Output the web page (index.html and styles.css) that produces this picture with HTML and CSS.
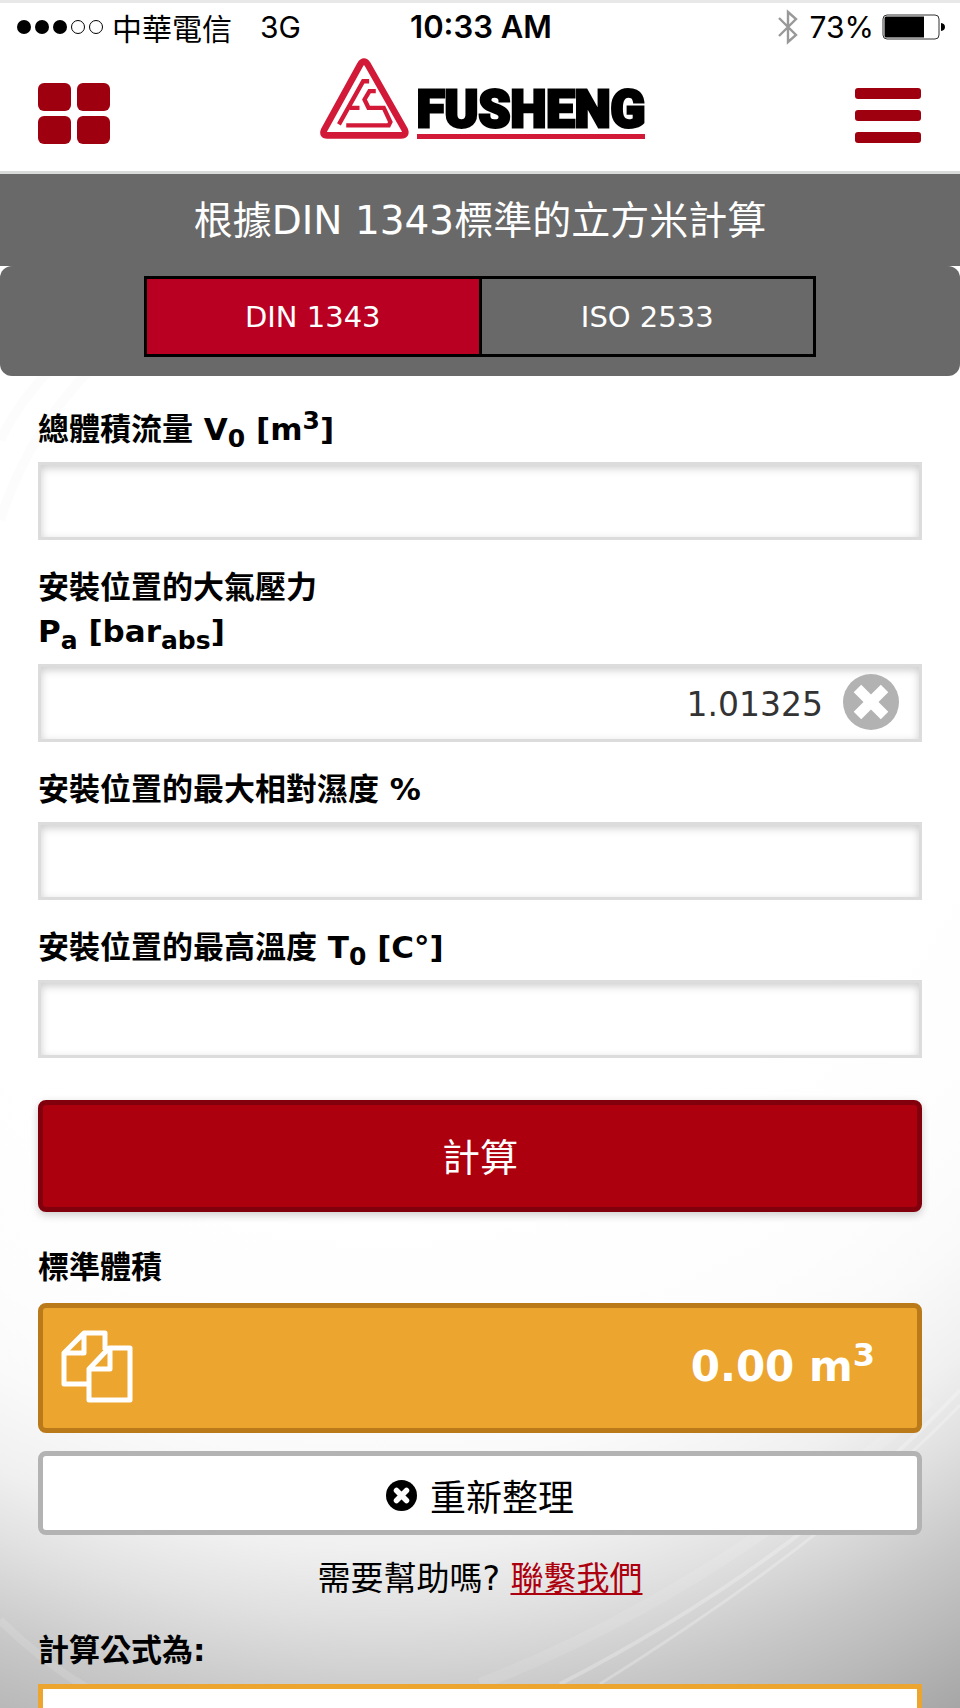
FILE: index.html
```
<!DOCTYPE html>
<html lang="zh-Hant">
<head>
<meta charset="utf-8">
<meta name="viewport" content="width=device-width, initial-scale=1">
<title>FUSHENG</title>
<link rel="stylesheet" href="styles.css">
</head>
<body class="page">
<svg class="rays" viewBox="0 0 960 1708" preserveAspectRatio="none" aria-hidden="true">
  <g fill="none" stroke="#fff">
    <path stroke-opacity=".25" stroke-width="4" d="M560 1684Q800 1560 960 1390"/>
    <path stroke-opacity=".25" stroke-width="3" d="M600 1684Q830 1540 960 1405"/>
    <path stroke-opacity=".1" stroke-width="12" d="M480 1684Q720 1590 930 1400"/>
    <path stroke-opacity=".12" stroke-width="8" d="M0 1620Q40 1660 90 1690"/>
  </g>
  <g fill="none" stroke="#000" stroke-opacity=".01" stroke-width="10">
    <path d="M0 440Q20 400 50 370"/>
    <path d="M0 520Q30 430 90 370"/>
  </g>
</svg>
<div class="status">
  <div class="status-left">
    <svg class="signal" width="88" height="16" viewBox="0 0 88 16" aria-hidden="true">
      <circle cx="8" cy="8" r="7"/><circle cx="26" cy="8" r="7"/><circle cx="44" cy="8" r="7"/>
      <g fill="#fff" stroke="#000"><circle cx="62" cy="8" r="6.5"/><circle cx="80" cy="8" r="6.5"/></g>
    </svg>
    <span class="carrier">中華電信</span>
    <span>3G</span>
  </div>
  <div class="clock">10:33 AM</div>
  <div class="status-right">
    <svg width="20" height="36" viewBox="0 0 20 36" fill="none" stroke="#999" stroke-width="2.4" aria-hidden="true">
      <path d="M1 9L18 26L10 33V3L18 10L1 27"/>
    </svg>
    <span>73%</span>
    <svg width="64" height="26" viewBox="0 0 64 26" aria-hidden="true">
      <rect x="1" y="1" width="56" height="24" rx="4" fill="#fff" stroke="#333"/>
      <path d="M4 2.500H42V23.500H4Q2.500 23.500 2.500 22V4Q2.500 2.500 4 2.500Z"/>
      <path d="M59 9Q63 9.500 63 13T59 17Z"/>
    </svg>
  </div>
</div>
<header class="header">
  <button class="icon-btn" type="button" aria-label="應用">
    <svg width="72" height="61" viewBox="0 0 72 61" fill="#9f000f">
      <rect width="33" height="28" rx="6"/><rect x="39" width="33" height="28" rx="6"/>
      <rect y="33" width="33" height="28" rx="6"/><rect x="39" y="33" width="33" height="28" rx="6"/>
    </svg>
  </button>
  <a class="logo" href="#">
    <svg width="89" height="81" viewBox="60 24 268 244" fill="none" stroke="#d21a38" aria-hidden="true">
      <path stroke-width="20" d="M181 44Q192 26 204 44L315 240Q322 257 304 257H82Q65 257 73 240Z"/>
      <g stroke-width="13">
        <path d="M208 94H190L117 224M150 174H179"/>
        <path d="M228 124H209L194 149L206 174H252L272 217L267 227H139"/>
      </g>
    </svg>
    <span class="wordmark">FUSHENG</span>
  </a>
  <button class="icon-btn" type="button" aria-label="選單">
    <svg width="66" height="60" viewBox="0 0 66 60" fill="#9f000f">
      <rect y="4" width="66" height="11" rx="3"/><rect y="26" width="66" height="11" rx="3"/><rect y="48" width="66" height="11" rx="3"/>
    </svg>
  </button>
</header>
<h1 class="title">根據DIN 1343標準的立方米計算</h1>
<nav class="switch">
  <button class="tab tab-on" type="button">DIN 1343</button>
  <button class="tab" type="button">ISO 2533</button>
</nav>
<main class="content">
  <form class="form">
    <label class="label" for="flow">總體積流量 V<sub>0</sub> [m<sup>3</sup>]</label>
    <input class="input" id="flow" type="text">
    <label class="label" for="pressure">安裝位置的大氣壓力<br>P<sub>a</sub> [bar<sub>abs</sub>]</label>
    <div class="clearable">
      <input class="input" id="pressure" type="text" value="1.01325">
      <button class="clear" type="button" aria-label="清除">
        <svg width="56" height="56" viewBox="0 0 58 58">
          <circle cx="29" cy="29" r="29" fill="#b2b2b2"/>
          <path d="M15 15L43 43M43 15L15 43" stroke="#fff" stroke-width="11"/>
        </svg>
      </button>
    </div>
    <label class="label" for="humidity">安裝位置的最大相對濕度 %</label>
    <input class="input" id="humidity" type="text">
    <label class="label" for="temp">安裝位置的最高溫度 T<sub>0</sub> [C°]</label>
    <input class="input" id="temp" type="text">
    <button class="submit" type="button">計算</button>
  </form>
  <h2 class="label result-label">標準體積</h2>
  <div class="result">
    <svg width="72" height="74" viewBox="0 0 72 74" fill="none" stroke="#fff" stroke-width="5" stroke-linejoin="round" aria-hidden="true">
      <path d="M27 55H3V24L23 4H44V21M23 4V24H3"/>
      <path d="M28 40L48 19H69V71H28ZM49 19V40H28"/>
    </svg>
    <output class="value">0.00 m<sup>3</sup></output>
  </div>
  <button class="reset" type="button">
    <svg width="31" height="31" viewBox="0 0 31 31" aria-hidden="true">
      <circle cx="15.500" cy="15.500" r="15.500"/>
      <path d="M10.500 10.500L20.500 20.500M20.500 10.500L10.500 20.500" stroke="#fff" stroke-width="5.500" stroke-linecap="round"/>
    </svg>
    <span>重新整理</span>
  </button>
  <p class="help">需要幫助嗎? <a class="link" href="#">聯繫我們</a></p>
  <h2 class="label formula-label">計算公式為:</h2>
  <div class="formula"></div>
</main>
</body>
</html>
```

FILE: styles.css
```
*, *::before, *::after { box-sizing: border-box; }

.page {
  position: relative;
  display: flex;
  flex-direction: column;
  min-height: 100vh;
  margin: 0;
  color: #000;
  font-family: "DejaVu Sans", "Noto Sans CJK TC", sans-serif;
  background: radial-gradient(circle 1300px at 40% 600px, #fff 45%, #fdfdfd 60%, #fafafa 66%, #f0f0f0 73%, #e1e1e1 78%, #c8c8c8 85%, #b9b9b9 90%, #a6a6a6 96%);
}

.rays {
  position: absolute;
  inset: 0;
  z-index: -1;
  width: 100%;
  height: 100%;
}

button, input { font-family: inherit; margin: 0; }
button { padding: 0; border: 0; background: none; cursor: pointer; }
svg { display: block; flex: none; }

.status {
  display: grid;
  grid-template-columns: 1fr auto 1fr;
  align-items: center;
  height: 50px;
  padding: 0 14px 0 16px;
  border-top: 3px solid #e8e8e8;
  background: #fff;
  font-family: Inter, "Noto Sans CJK TC", sans-serif;
  font-size: 30px;
}
.status-left, .status-right { display: flex; align-items: center; }
.status-left { gap: 8px; }
.status-right { justify-content: flex-end; gap: 8px; }
.status-right svg:first-child { margin-right: 4px; }
.carrier { margin-right: 20px; }
.clock { font-size: 31px; font-weight: 600; }

.header {
  display: flex;
  align-items: center;
  justify-content: space-between;
  height: 124px;
  padding: 6px 39px 0 38px;
  border-bottom: 3px solid #d9dbda;
  background: #fff;
}
.logo {
  display: flex;
  align-items: flex-end;
  gap: 8px;
  padding-bottom: 30px;
  color: #000;
  text-decoration: none;
}
.wordmark {
  border-bottom: 5px solid #d21a38;
  font-family: Impact, Roboto, sans-serif;
  font-size: 51px;
  font-weight: 900;
  line-height: 48px;
  -webkit-text-stroke: 3px #000;
}

.title {
  margin: 0;
  padding: 19px 16px 17px;
  color: #fff;
  background: #696969;
  font-size: 39px;
  font-weight: 400;
  line-height: 56px;
  text-align: center;
}

.switch {
  display: flex;
  padding: 10px 15% 19px;
  border-radius: 12px;
  background: #696969;
}
.tab {
  flex: 1;
  height: 81px;
  border: 3px solid #000;
  color: #fff;
  font-size: 29px;
}
.tab + .tab { border-left: 0; }
.tab-on { background: #b90022; }

.content {
  display: flex;
  flex: 1;
  flex-direction: column;
  padding: 6px 38px 0;
}
.form { display: flex; flex-direction: column; }

.label {
  margin: 25px 0 11px;
  font-size: 31px;
  font-weight: 700;
  line-height: 44px;
}
.label sub, .label sup, .value sup { font-size: 25px; line-height: 0; }

.input {
  display: block;
  width: 100%;
  height: 78px;
  padding: 2px 96px 0 20px;
  border: 3px solid #dcdcdc;
  border-radius: 0;
  background: #fff;
  box-shadow: inset 0 3px 8px #ccc;
  color: #333;
  font-size: 33px;
  text-align: right;
}
.clearable { position: relative; }
.clear { position: absolute; top: 10px; right: 23px; }

.submit {
  height: 112px;
  margin-top: 42px;
  padding-bottom: 4px;
  border: 5px solid #82000c;
  border-radius: 8px;
  background: #ad000f;
  box-shadow: 0 3px 8px rgba(0, 0, 0, .2);
  color: #fff;
  font-size: 38px;
}

.result-label { margin: 33px 0 14px; }
.result {
  display: flex;
  align-items: center;
  justify-content: space-between;
  height: 130px;
  padding: 0 42px 4px 18px;
  border: 5px solid #ba7a1a;
  border-radius: 8px;
  background: #eca52f;
  color: #fff;
}
.value { font-size: 42px; font-weight: 700; }
.value sup { font-size: 32px; }

.reset {
  display: flex;
  align-items: center;
  justify-content: center;
  gap: 13px;
  height: 84px;
  margin-top: 18px;
  padding-top: 4px;
  border: 5px solid #b3b3b3;
  border-radius: 8px;
  background: #fff;
  color: #000;
  font-size: 36px;
}

.help {
  margin: 22px 0 2px;
  font-size: 33px;
  line-height: 44px;
  text-align: center;
}
.link { color: #ad000f; text-underline-offset: 3px; text-decoration-thickness: 2px; }

.formula-label { margin-bottom: 12px; }
.formula {
  flex: 1;
  min-height: 24px;
  border: 5px solid #eca52f;
  border-bottom: 0;
  background: #fff;
}
```
